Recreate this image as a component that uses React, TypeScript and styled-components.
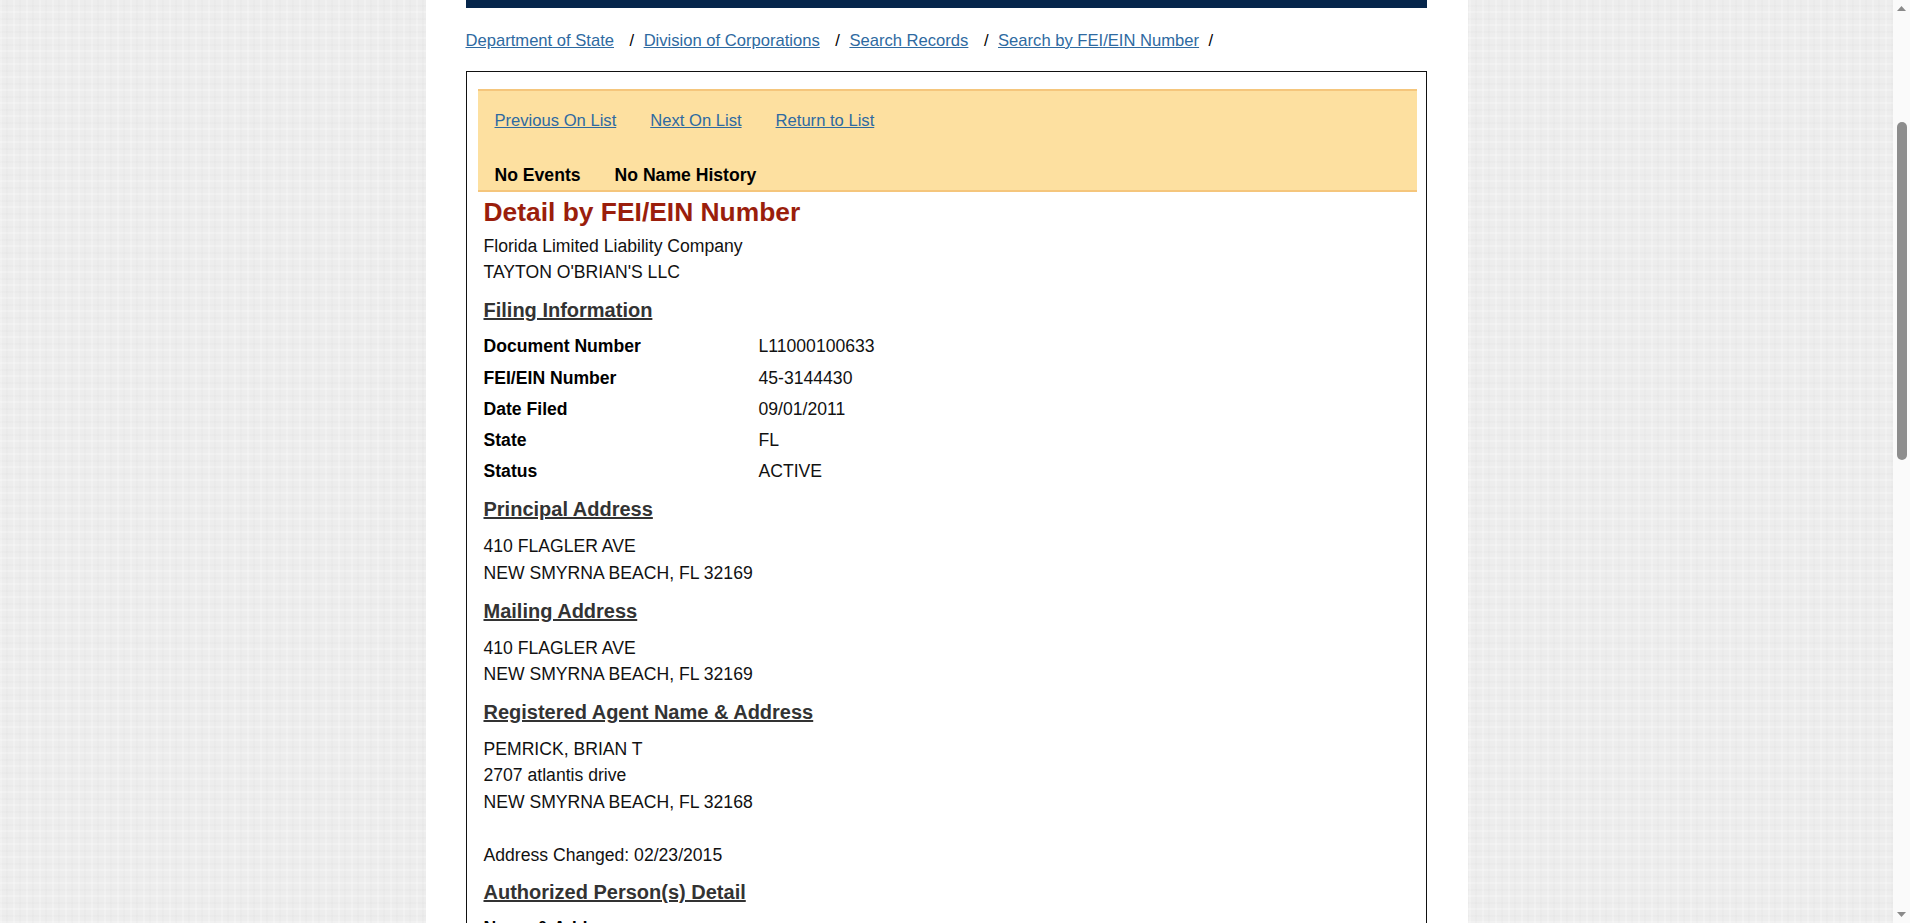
import React from "react";
import styled, { createGlobalStyle } from "styled-components";

const GlobalStyle = createGlobalStyle`
  html, body {
    margin: 0;
    padding: 0;
    overflow: hidden;
    height: 923px;
  }
  body {
    font-family: "Liberation Sans", Arial, sans-serif;
    color: #000;
  }
`;

const Screen = styled.div`
  display: flex;
  width: 1910px;
  height: 923px;
  overflow: hidden;
`;

const Backdrop = styled.div`
  flex: 1;
  display: flex;
  justify-content: center;
  background-color: #ededed;
  background-image:
    repeating-linear-gradient(90deg, rgba(255,255,255,0.22) 0 2px, transparent 2px 6px, rgba(0,0,0,0.01) 6px 8px, transparent 8px 13px),
    repeating-linear-gradient(0deg, rgba(255,255,255,0.22) 0 2px, transparent 2px 6px, rgba(0,0,0,0.01) 6px 8px, transparent 8px 13px);
`;

const Column = styled.div`
  width: 1042px;
  box-sizing: border-box;
  padding: 0 41px 0 40px;
  background: #ffffff;
  display: flex;
  flex-direction: column;
  overflow: hidden;
  & > * {
    flex-shrink: 0;
  }
`;

const NavStrip = styled.div`
  height: 8px;
  background: #06264b;
`;

const Breadcrumb = styled.nav`
  margin-top: 20px;
  height: 26px;
  line-height: 26px;
  font-size: 16.6px;
  display: flex;
  align-items: center;
  white-space: nowrap;
`;

const CrumbLink = styled.a`
  color: #2e6aa1;
  text-decoration: underline;
`;

const Slash = styled.span<{ $last?: boolean }>`
  color: #000;
  margin: 0 9.5px 0 ${(p) => (p.$last ? 9.5 : 15.5)}px;
`;

const Box = styled.section`
  margin-top: 17px;
  border: 1px solid #111;
  border-bottom: none;
  padding: 0 9px 0 11px;
  min-height: 900px;
`;

const NavPanel = styled.div`
  margin-top: 17px;
  background: #fde0a0;
  border-top: 2px solid #f5c67c;
  border-bottom: 2px solid #f5c67c;
  padding: 17px 17px 2px;
`;

const PanelRow = styled.div<{ $top?: number }>`
  display: flex;
  gap: 34px;
  line-height: 26px;
  margin-top: ${(p) => p.$top ?? 0}px;
`;

const PanelLink = styled.a`
  color: #2e6aa1;
  font-size: 16.6px;
  text-decoration: underline;
`;

const PanelLabel = styled.span`
  font-weight: bold;
  font-size: 17.6px;
  color: #000;
`;

const Detail = styled.div`
  padding-left: 6px;
  display: flex;
  flex-direction: column;
  font-size: 17.6px;
`;

const Title = styled.h1`
  margin: 4px 0 0;
  font-size: 26.4px;
  line-height: 32px;
  font-weight: bold;
  color: #9a1e0c;
`;

const TextBlock = styled.div<{ $top: number }>`
  margin-top: ${(p) => p.$top}px;
  line-height: 26.4px;
  color: #111;
`;

const Heading = styled.h2<{ $top: number }>`
  margin: ${(p) => p.$top}px 0 0;
  font-size: 20px;
  line-height: 28px;
  font-weight: bold;
  color: #333;
  text-decoration: underline;
`;

const FactTable = styled.div`
  margin-top: 7.4px;
  display: grid;
  grid-template-columns: 275px 1fr;
  grid-auto-rows: 31.25px;
  align-items: center;
`;

const FactLabel = styled.span`
  font-weight: bold;
  color: #000;
`;

const FactValue = styled.span`
  color: #111;
`;

const SubLabel = styled.div`
  margin-top: 9px;
  font-weight: bold;
  line-height: 26px;
`;

const Scrollbar = styled.div`
  width: 17px;
  background: #fafafa;
  display: flex;
  flex-direction: column;
  align-items: center;
`;

const ArrowCell = styled.div`
  height: 17px;
  width: 17px;
  display: flex;
  align-items: center;
  justify-content: center;
`;

const Track = styled.div`
  flex: 1;
  width: 17px;
  display: flex;
  flex-direction: column;
  align-items: center;
`;

const Thumb = styled.div`
  margin-top: 105px;
  width: 10px;
  height: 338px;
  border-radius: 5px;
  background: #8d8d8d;
`;

const Arrow = ({ down }: { down?: boolean }) => (
  <svg width="9" height="6" viewBox="0 0 9 6">
    {down ? (
      <polygon points="0,0 9,0 4.5,5" fill="#8a8a8a" />
    ) : (
      <polygon points="4.5,0 9,5 0,5" fill="#8a8a8a" />
    )}
  </svg>
);

const crumbs = [
  "Department of State",
  "Division of Corporations",
  "Search Records",
  "Search by FEI/EIN Number",
];

const facts: [string, string][] = [
  ["Document Number", "L11000100633"],
  ["FEI/EIN Number", "45-3144430"],
  ["Date Filed", "09/01/2011"],
  ["State", "FL"],
  ["Status", "ACTIVE"],
];

export default function App() {
  return (
    <>
      <GlobalStyle />
      <Screen>
        <Backdrop>
          <Column>
            <NavStrip />
            <Breadcrumb>
              {crumbs.map((c, i) => (
                <React.Fragment key={c}>
                  <CrumbLink href="#">{c}</CrumbLink>
                  <Slash $last={i === crumbs.length - 1}>/</Slash>
                </React.Fragment>
              ))}
            </Breadcrumb>
            <Box>
              <NavPanel>
                <PanelRow>
                  <PanelLink href="#">Previous On List</PanelLink>
                  <PanelLink href="#">Next On List</PanelLink>
                  <PanelLink href="#">Return to List</PanelLink>
                </PanelRow>
                <PanelRow $top={28}>
                  <PanelLabel>No Events</PanelLabel>
                  <PanelLabel>No Name History</PanelLabel>
                </PanelRow>
              </NavPanel>
              <Detail>
                <Title>Detail by FEI/EIN Number</Title>
                <TextBlock $top={4.5}>
                  Florida Limited Liability Company
                  <br />
                  TAYTON O'BRIAN'S LLC
                </TextBlock>
                <Heading $top={10.5}>Filing Information</Heading>
                <FactTable>
                  {facts.map(([l, v]) => (
                    <React.Fragment key={l}>
                      <FactLabel>{l}</FactLabel>
                      <FactValue>{v}</FactValue>
                    </React.Fragment>
                  ))}
                </FactTable>
                <Heading $top={8}>Principal Address</Heading>
                <TextBlock $top={10}>
                  410 FLAGLER AVE
                  <br />
                  NEW SMYRNA BEACH, FL 32169
                </TextBlock>
                <Heading $top={10.5}>Mailing Address</Heading>
                <TextBlock $top={10}>
                  410 FLAGLER AVE
                  <br />
                  NEW SMYRNA BEACH, FL 32169
                </TextBlock>
                <Heading $top={10.5}>Registered Agent Name &amp; Address</Heading>
                <TextBlock $top={10}>
                  PEMRICK, BRIAN T
                  <br />
                  2707 atlantis drive
                  <br />
                  NEW SMYRNA BEACH, FL 32168
                  <br />
                  <br />
                  Address Changed: 02/23/2015
                </TextBlock>
                <Heading $top={10}>Authorized Person(s) Detail</Heading>
                <SubLabel>Name &amp; Address</SubLabel>
              </Detail>
            </Box>
          </Column>
        </Backdrop>
        <Scrollbar>
          <ArrowCell>
            <Arrow />
          </ArrowCell>
          <Track>
            <Thumb />
          </Track>
          <ArrowCell>
            <Arrow down />
          </ArrowCell>
        </Scrollbar>
      </Screen>
    </>
  );
}
